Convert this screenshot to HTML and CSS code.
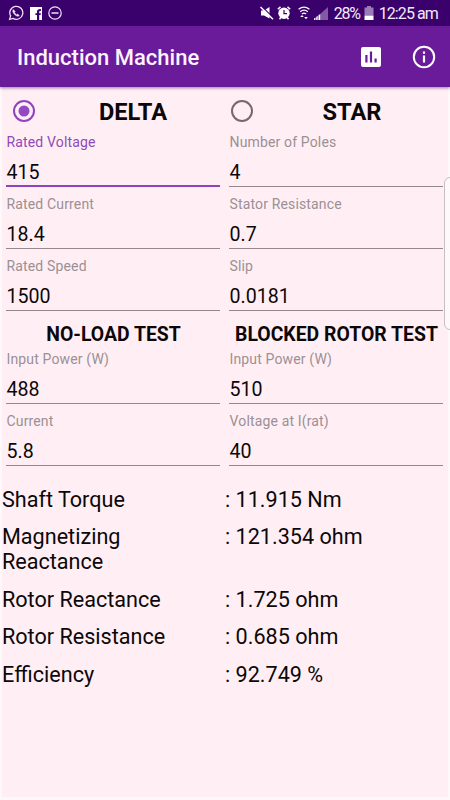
FILE: index.html
```html
<!DOCTYPE html>
<html lang="en">
<head>
    <meta charset="UTF-8">
    <meta name="viewport" content="width=device-width, initial-scale=1.0">
    <title>Induction Machine</title>
    <link rel="stylesheet" href="styles.css">
</head>
<body>
    <div class="statusbar">
        <div class="notifications">
            <svg width="16" height="16" viewBox="0 0 16 16" fill="none" stroke="#efe2f8">
                <path d="M1.600 14.400l1-3.500A6.500 6.500 0 1 1 5 13.400z" stroke-width="1.300"/>
                <path d="M5.300 4.600c-1.300 1.400-.2 3.400 1.300 4.900s3.500 2.400 4.700 1.100l-1.700-1.500-1 .7C7.700 9.300 7 8.500 6.500 7.500l.7-1z" fill="#efe2f8" stroke="#efe2f8" stroke-width=".5"/>
            </svg>
            <svg width="12" height="13" viewBox="0 0 12 13">
                <path fill="#fff" fill-rule="evenodd" d="M0 0h12v13H9.200V8h1.500V6.200H9.200V5c0-.8.300-1.100 1.700-1.100V2.100C8.400 1.900 7 2.800 7 4.800v1.400H5.400V8H7v5H0z"/>
            </svg>
            <svg width="14" height="14" viewBox="0 0 14 14" fill="none" stroke="#efe2f8" stroke-width="1.200">
                <circle cx="7" cy="7" r="6.200"/>
                <path d="M3.500 7h7" stroke-width="1.500"/>
            </svg>
        </div>
        <div class="system">
            <svg class="mute" width="14" height="14" viewBox="0 0 14 14">
                <path fill="#fff" d="M1 4.500h3L9.500 1v11.500L4 9.500H1z"/>
                <path d="M1.500 0l13 13" stroke="#3a006b" stroke-width="1.200"/>
                <path d="M.5 1L13 13.300" stroke="#fff" stroke-width="1.500"/>
            </svg>
            <svg class="alarm" width="14" height="14" viewBox="0 0 14 14">
                <circle cx="7" cy="7.300" r="5.700" fill="#fff"/>
                <path d="M.8 3.300L3.500.9M13.200 3.300L10.500.9M2.500 13.300l1.500-2M11.500 13.300l-1.500-2" stroke="#fff" stroke-width="1.500"/>
                <path d="M7 4v3.700h3" fill="none" stroke="#3a006b" stroke-width="1.200"/>
            </svg>
            <svg class="wifi" width="12" height="14" viewBox="0 0 12 14" fill="none" stroke="#fff" stroke-width="1.300">
                <path d="M.6 3.300q5.400-4.300 10.800 0M2.200 5.700q3.800-3 7.600 0M3.900 8q2.100-1.600 4.200 0"/>
                <path d="M2.200 11L4 8.900 5.800 11zM6.200 11L8 13.300 9.800 11z" fill="#fff" stroke="none"/>
            </svg>
            <svg class="signal" width="14" height="13" viewBox="0 0 14 13">
                <path fill="#8259a3" d="M6.300 7L14 0v13H6.300z"/>
                <path fill="#fff" d="M0 11.500l1.500-1V13H0zM2.200 10L3.700 8.800V13H2.200zM4.400 8.300L6.300 7v6H4.400z"/>
            </svg>
            <span class="percent">28%</span>
            <svg class="battery" width="10" height="14" viewBox="0 0 10 14">
                <path fill="#9b7bb5" d="M3 0h4v1.500h2.500V9.500h-9v-8H3z"/>
                <path fill="#fff" d="M.5 9.500h9V14h-9z"/>
            </svg>
            <span class="clock">12:25 am</span>
        </div>
    </div>

    <div class="toolbar">
        <h1>Induction Machine</h1>
        <svg class="chart" width="20" height="20" viewBox="0 0 20 20">
            <rect width="20" height="20" rx="2" fill="#fff"/>
            <path fill="#6a1b9a" d="M4.300 8h2.200v7.500H4.300zM8.900 4.500h2.200v11H8.900zM13.500 11.500h2.200v4h-2.200z"/>
        </svg>
        <svg class="info" width="24" height="24" viewBox="0 0 24 24">
            <circle cx="12" cy="12" r="10.200" fill="none" stroke="#fff" stroke-width="2"/>
            <path fill="#fff" d="M10.900 6.500h2.200v2.200h-2.200zM10.900 10.500h2.200v7h-2.200z"/>
        </svg>
    </div>

    <div class="content">
        <div class="grid">
            <div class="option">
                <svg class="radio" width="24" height="24" viewBox="0 0 24 24">
                    <circle cx="12" cy="12" r="10" fill="none" stroke="#8e44bd" stroke-width="2"/>
                    <circle cx="12" cy="12" r="5.500" fill="#9448c4"/>
                </svg>
                <b>DELTA</b>
            </div>
            <div class="option star">
                <svg class="radio" width="24" height="24" viewBox="0 0 24 24">
                    <circle cx="12" cy="12" r="10" fill="none" stroke="#746a6e" stroke-width="2"/>
                </svg>
                <b>STAR</b>
            </div>
            <div class="field active"><label>Rated Voltage</label><span class="value">415</span></div>
            <div class="field"><label>Number of Poles</label><span class="value">4</span></div>
            <div class="field"><label>Rated Current</label><span class="value">18.4</span></div>
            <div class="field"><label>Stator Resistance</label><span class="value">0.7</span></div>
            <div class="field"><label>Rated Speed</label><span class="value">1500</span></div>
            <div class="field"><label>Slip</label><span class="value">0.0181</span></div>
            <h2>NO-LOAD TEST</h2>
            <h2>BLOCKED ROTOR TEST</h2>
            <div class="field"><label>Input Power (W)</label><span class="value">488</span></div>
            <div class="field"><label>Input Power (W)</label><span class="value">510</span></div>
            <div class="field"><label>Current</label><span class="value">5.8</span></div>
            <div class="field"><label>Voltage at I(rat)</label><span class="value">40</span></div>
        </div>

        <div class="results">
            <div class="name">Shaft Torque</div><div>: 11.915 Nm</div>
            <div class="name">Magnetizing Reactance</div><div>: 121.354 ohm</div>
            <div class="name">Rotor Reactance</div><div>: 1.725 ohm</div>
            <div class="name">Rotor Resistance</div><div>: 0.685 ohm</div>
            <div class="name">Efficiency</div><div>: 92.749 %</div>
        </div>
    </div>
    <!-- edge panel handle -->
    <div class="handle"></div>
</body>
</html>
```
FILE: styles.css
```css
body {
    font-family: Roboto, sans-serif;
    margin: 0;
    width: 450px;
    height: 800px;
    overflow: hidden;
    position: relative;
    background: #fdf9fb;
    color: #0c0809;
}
.statusbar {
    height: 26px;
    background: #3a006b;
    display: flex;
    justify-content: space-between;
    align-items: center;
    padding: 0 12px 0 8px;
    color: #f3eaf9;
    font-size: 16px;
}
.notifications, .system {
    display: flex;
    align-items: center;
}
.notifications {
    gap: 6px;
}
.alarm {
    margin-left: 3px;
}
.wifi {
    margin-left: 7px;
}
.signal {
    margin-left: 4px;
}
.percent {
    margin-left: 6px;
    letter-spacing: -1.3px;
}
.battery {
    margin-left: 4px;
}
.clock {
    margin-left: 5px;
    letter-spacing: -0.9px;
}
.toolbar {
    height: 61px;
    background: #6a1b9a;
    display: flex;
    align-items: center;
    padding: 0 14px 0 17px;
    position: relative;
    box-shadow: 0 1px 3px rgba(60, 10, 90, 0.5);
}
h1 {
    flex: 1;
    margin: 0;
    padding-top: 2px;
    font-size: 22px;
    font-weight: 500;
    color: #fbf3ff;
}
.info {
    margin-left: 31px;
}
.content {
    margin: 0 2px;
    height: 710px;
    background: #ffeff4;
}
.grid {
    display: grid;
    grid-template-columns: 223px 223px;
    padding-top: 8px;
}
.option {
    height: 35px;
    display: flex;
    align-items: center;
    font-size: 23.6px;
}
.radio {
    margin: -3px 0 0 10px;
}
.option b {
    flex: 1;
    text-align: center;
    padding: 0 0 1px 5px;
}
.star .radio {
    margin-left: 5px;
}
.star b {
    padding-left: 2px;
}
.field {
    height: 62.2px;
    box-sizing: border-box;
    padding: 4px 5px 0 4px;
    display: flex;
    flex-direction: column;
}
.field label {
    padding-left: 0.5px;
    font-size: 14px;
    line-height: 16px;
    letter-spacing: 0.15px;
    color: #9b9094;
}
.value {
    margin-top: 8px;
    padding-left: 0.5px;
    height: 28px;
    font-size: 19.6px;
    line-height: 29px;
    border-bottom: 1px solid #93888c;
}
.active label {
    color: #8e4abb;
}
.active .value {
    height: 27px;
    border-bottom: 2px solid #8e44bd;
}
h2 {
    margin: 0;
    height: 30px;
    line-height: 36px;
    font-size: 19.4px;
    text-align: center;
    white-space: nowrap;
}
.results {
    display: grid;
    grid-template-columns: 223px 223px;
    row-gap: 12px;
    margin-top: 15.6px;
    font-size: 21.6px;
    line-height: 25.4px;
}
.name {
    padding-right: 50px;
}
.handle {
    position: absolute;
    left: 444px;
    top: 177px;
    width: 12px;
    height: 151px;
    border: 1px solid #c8bec3;
    border-radius: 6px;
    background: #fdf9fb;
}
```
